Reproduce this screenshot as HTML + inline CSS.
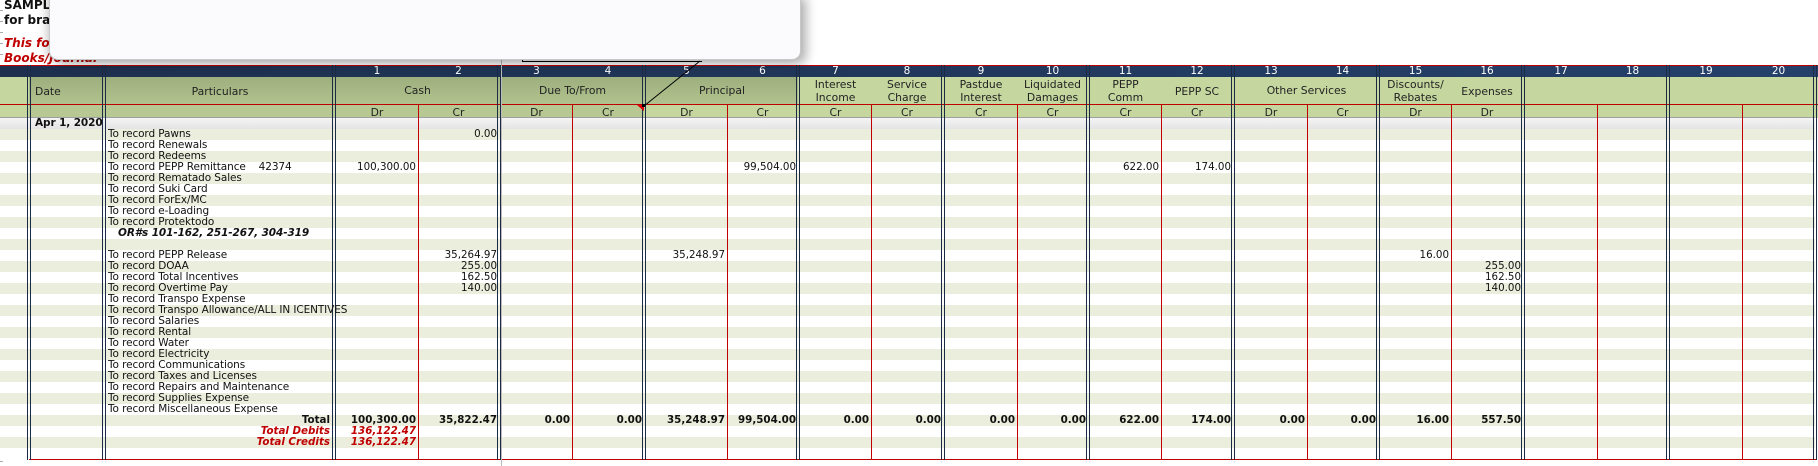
<!DOCTYPE html>
<html><head><meta charset="utf-8"><style>
*{margin:0;padding:0;box-sizing:border-box}
body{width:1818px;height:466px;overflow:hidden;background:#fff;position:relative;font-family:"DejaVu Sans","Liberation Sans",sans-serif;}
div{position:absolute}
.t{font-size:10.5px;line-height:11px;white-space:nowrap;color:#111;letter-spacing:-0.1px}
.n{font-size:10.3px;line-height:11px;white-space:nowrap;text-align:right;padding-right:2px;color:#111}
.b{font-weight:bold}
.r{color:#c00000;font-style:italic;font-weight:bold}
.h{font-size:10.8px;line-height:13px;text-align:center;color:#222;font-family:"DejaVu Sans",sans-serif}
.num{color:#fff;font-size:10.5px;line-height:12px;text-align:center;top:65px}
.vr{background:#c00000;width:1px;top:105px;height:355px}
.vd{border-left:1px solid #1c2b45;border-right:1px solid #1c2b45;width:4px;top:65px;height:395px}
</style></head><body>
<div class="b" style="left:4px;top:-1px;font-size:12px;line-height:13px;color:#111">SAMPLE</div>
<div class="b" style="left:4px;top:14px;font-size:12px;line-height:13px;color:#111">for branches</div>
<div class="r" style="left:4px;top:37px;font-size:12px;line-height:13px">This form</div>
<div class="r" style="left:4px;top:52px;font-size:12px;line-height:13px">Books/Journal</div>
<div style="left:522px;top:59px;width:180px;height:3px;border-top:1px solid #000;border-bottom:1px solid #000;border-left:1px solid #000"></div>
<div style="left:0;top:0;width:3px;height:466px;background:repeating-linear-gradient(#fff 0 10px,#aaa 10px 11px)"></div>
<div style="left:0;top:65px;width:1818px;height:13px;background:linear-gradient(90deg,#1d2f4d,#25416a);border-top:1px solid #c00000;border-bottom:1px solid #c00000"></div>
<div style="left:0;top:77px;width:1818px;height:41px;background:#c5d79f"></div>
<div style="left:29px;top:77px;width:769px;height:28px;background:linear-gradient(180deg,#9daf7d,#b2c38f)"></div>
<div style="left:29px;top:105px;width:615px;height:13px;background:#b7c892"></div>
<div style="left:0;top:104px;width:1818px;height:1px;background:#c00000"></div>
<div style="left:0;top:118px;width:1815px;height:341px;background:repeating-linear-gradient(#fff 0 11px,#ebeedd 11px 22px)"></div>
<div style="left:0;top:118px;width:1815px;height:11px;background:linear-gradient(#f4f4f4,#e4e4e4)"></div>
<div style="left:0;top:117px;width:1815px;height:1px;background:#a0a0a0"></div>
<div style="left:29px;top:459px;width:1788px;height:1px;background:#c00000"></div>
<div style="left:501px;top:0;width:1px;height:466px;background:#bbb"></div>
<div class="vr" style="left:418px"></div><div class="vr" style="left:572px"></div><div class="vr" style="left:727px"></div>
<div class="vr" style="left:871px"></div><div class="vr" style="left:1017px"></div><div class="vr" style="left:1161px"></div>
<div class="vr" style="left:1307px"></div><div class="vr" style="left:1451px"></div><div class="vr" style="left:1597px"></div>
<div class="vr" style="left:1742px"></div>
<div class="vd" style="left:27px"></div><div class="vd" style="left:102px"></div><div class="vd" style="left:332px"></div>
<div class="vd" style="left:497px"></div><div class="vd" style="left:642px"></div><div class="vd" style="left:796px"></div>
<div class="vd" style="left:941px"></div><div class="vd" style="left:1086px"></div><div class="vd" style="left:1231px"></div>
<div class="vd" style="left:1376px"></div><div class="vd" style="left:1521px"></div><div class="vd" style="left:1666px"></div>
<div class="vd" style="left:1813px"></div>
<div class="num" style="left:336px;width:82px">1</div><div class="num" style="left:418px;width:81px">2</div>
<div class="num" style="left:501px;width:71px">3</div><div class="num" style="left:572px;width:72px">4</div>
<div class="num" style="left:646px;width:81px">5</div><div class="num" style="left:727px;width:71px">6</div>
<div class="num" style="left:800px;width:71px">7</div><div class="num" style="left:871px;width:72px">8</div>
<div class="num" style="left:945px;width:72px">9</div><div class="num" style="left:1017px;width:71px">10</div>
<div class="num" style="left:1090px;width:71px">11</div><div class="num" style="left:1161px;width:72px">12</div>
<div class="num" style="left:1235px;width:72px">13</div><div class="num" style="left:1307px;width:71px">14</div>
<div class="num" style="left:1380px;width:71px">15</div><div class="num" style="left:1451px;width:72px">16</div>
<div class="num" style="left:1525px;width:72px">17</div><div class="num" style="left:1597px;width:71px">18</div>
<div class="num" style="left:1670px;width:72px">19</div><div class="num" style="left:1742px;width:73px">20</div>
<div class="h" style="left:32px;top:85px;width:60px;text-align:left;padding-left:3px">Date</div>
<div class="h" style="left:106px;top:85px;width:228px">Particulars</div>
<div class="h" style="left:336px;top:84px;width:163px">Cash</div>
<div class="h" style="left:501px;top:84px;width:143px">Due To/From</div>
<div class="h" style="left:646px;top:84px;width:152px">Principal</div>
<div class="h" style="left:800px;top:78px;width:71px">Interest<br>Income</div>
<div class="h" style="left:871px;top:78px;width:72px">Service<br>Charge</div>
<div class="h" style="left:945px;top:78px;width:72px">Pastdue<br>Interest</div>
<div class="h" style="left:1017px;top:78px;width:71px">Liquidated<br>Damages</div>
<div class="h" style="left:1090px;top:78px;width:71px">PEPP<br>Comm</div>
<div class="h" style="left:1161px;top:85px;width:72px">PEPP SC</div>
<div class="h" style="left:1235px;top:84px;width:143px">Other Services</div>
<div class="h" style="left:1380px;top:78px;width:71px">Discounts/<br>Rebates</div>
<div class="h" style="left:1451px;top:85px;width:72px">Expenses</div>
<div class="h" style="left:336px;top:106px;width:82px">Dr</div><div class="h" style="left:418px;top:106px;width:81px">Cr</div>
<div class="h" style="left:501px;top:106px;width:71px">Dr</div><div class="h" style="left:572px;top:106px;width:72px">Cr</div>
<div class="h" style="left:646px;top:106px;width:81px">Dr</div><div class="h" style="left:727px;top:106px;width:71px">Cr</div>
<div class="h" style="left:800px;top:106px;width:71px">Cr</div><div class="h" style="left:871px;top:106px;width:72px">Cr</div>
<div class="h" style="left:945px;top:106px;width:72px">Cr</div><div class="h" style="left:1017px;top:106px;width:71px">Cr</div>
<div class="h" style="left:1090px;top:106px;width:71px">Cr</div><div class="h" style="left:1161px;top:106px;width:72px">Cr</div>
<div class="h" style="left:1235px;top:106px;width:72px">Dr</div><div class="h" style="left:1307px;top:106px;width:71px">Cr</div>
<div class="h" style="left:1380px;top:106px;width:71px">Dr</div><div class="h" style="left:1451px;top:106px;width:72px">Dr</div>
<div class="t b" style="left:35px;top:118px">Apr 1, 2020</div>
<div class="t" style="left:108px;top:129px">To record Pawns</div>
<div class="t" style="left:108px;top:140px">To record Renewals</div>
<div class="t" style="left:108px;top:151px">To record Redeems</div>
<div class="t" style="left:108px;top:162px">To record PEPP Remittance&nbsp;&nbsp;&nbsp; 42374</div>
<div class="t" style="left:108px;top:173px">To record Rematado Sales</div>
<div class="t" style="left:108px;top:184px">To record Suki Card</div>
<div class="t" style="left:108px;top:195px">To record ForEx/MC</div>
<div class="t" style="left:108px;top:206px">To record e-Loading</div>
<div class="t" style="left:108px;top:217px">To record Protektodo</div>
<div class="t b" style="left:118px;top:228px;font-style:italic">OR#s 101-162, 251-267, 304-319</div>
<div class="t" style="left:108px;top:250px">To record PEPP Release</div>
<div class="t" style="left:108px;top:261px">To record DOAA</div>
<div class="t" style="left:108px;top:272px">To record Total Incentives</div>
<div class="t" style="left:108px;top:283px">To record Overtime Pay</div>
<div class="t" style="left:108px;top:294px">To record Transpo Expense</div>
<div class="t" style="left:108px;top:305px">To record Transpo Allowance/ALL IN ICENTIVES</div>
<div class="t" style="left:108px;top:316px">To record Salaries</div>
<div class="t" style="left:108px;top:327px">To record Rental</div>
<div class="t" style="left:108px;top:338px">To record Water</div>
<div class="t" style="left:108px;top:349px">To record Electricity</div>
<div class="t" style="left:108px;top:360px">To record Communications</div>
<div class="t" style="left:108px;top:371px">To record Taxes and Licenses</div>
<div class="t" style="left:108px;top:382px">To record Repairs and Maintenance</div>
<div class="t" style="left:108px;top:393px">To record Supplies Expense</div>
<div class="t" style="left:108px;top:404px">To record Miscellaneous Expense</div>
<div class="n b" style="left:106px;width:226px;top:415px">Total</div>
<div class="n r" style="left:106px;width:226px;top:426px">Total Debits</div>
<div class="n r" style="left:106px;width:226px;top:437px">Total Credits</div>
<div class="n" style="left:418px;width:81px;top:129px">0.00</div>
<div class="n" style="left:336px;width:82px;top:162px">100,300.00</div>
<div class="n" style="left:727px;width:71px;top:162px">99,504.00</div>
<div class="n" style="left:1090px;width:71px;top:162px">622.00</div>
<div class="n" style="left:1161px;width:72px;top:162px">174.00</div>
<div class="n" style="left:418px;width:81px;top:250px">35,264.97</div>
<div class="n" style="left:646px;width:81px;top:250px">35,248.97</div>
<div class="n" style="left:1380px;width:71px;top:250px">16.00</div>
<div class="n" style="left:418px;width:81px;top:261px">255.00</div>
<div class="n" style="left:1451px;width:72px;top:261px">255.00</div>
<div class="n" style="left:418px;width:81px;top:272px">162.50</div>
<div class="n" style="left:1451px;width:72px;top:272px">162.50</div>
<div class="n" style="left:418px;width:81px;top:283px">140.00</div>
<div class="n" style="left:1451px;width:72px;top:283px">140.00</div>
<div class="n b" style="left:336px;width:82px;top:415px">100,300.00</div>
<div class="n b" style="left:418px;width:81px;top:415px">35,822.47</div>
<div class="n b" style="left:501px;width:71px;top:415px">0.00</div>
<div class="n b" style="left:572px;width:72px;top:415px">0.00</div>
<div class="n b" style="left:646px;width:81px;top:415px">35,248.97</div>
<div class="n b" style="left:727px;width:71px;top:415px">99,504.00</div>
<div class="n b" style="left:800px;width:71px;top:415px">0.00</div>
<div class="n b" style="left:871px;width:72px;top:415px">0.00</div>
<div class="n b" style="left:945px;width:72px;top:415px">0.00</div>
<div class="n b" style="left:1017px;width:71px;top:415px">0.00</div>
<div class="n b" style="left:1090px;width:71px;top:415px">622.00</div>
<div class="n b" style="left:1161px;width:72px;top:415px">174.00</div>
<div class="n b" style="left:1235px;width:72px;top:415px">0.00</div>
<div class="n b" style="left:1307px;width:71px;top:415px">0.00</div>
<div class="n b" style="left:1380px;width:71px;top:415px">16.00</div>
<div class="n b" style="left:1451px;width:72px;top:415px">557.50</div>
<div class="n r" style="left:336px;width:82px;top:426px">136,122.47</div>
<div class="n r" style="left:336px;width:82px;top:437px">136,122.47</div>
<div style="left:49px;top:-6px;width:752px;height:66px;background:#fbfafd;border:1px solid #c8c8c8;border-radius:0 0 9px 9px;box-shadow:6px 4px 10px rgba(0,0,0,0.28),-4px 0 8px rgba(0,0,0,0.15)"></div>
<svg style="position:absolute;left:0;top:0" width="1818" height="466">
<line x1="700" y1="61" x2="644" y2="106" stroke="#000" stroke-width="1"/>
<polygon points="637,105 644,105 644,111" fill="#e00000"/>
<rect x="642" y="104" width="3" height="3" fill="#000"/>
</svg>
</body></html>
